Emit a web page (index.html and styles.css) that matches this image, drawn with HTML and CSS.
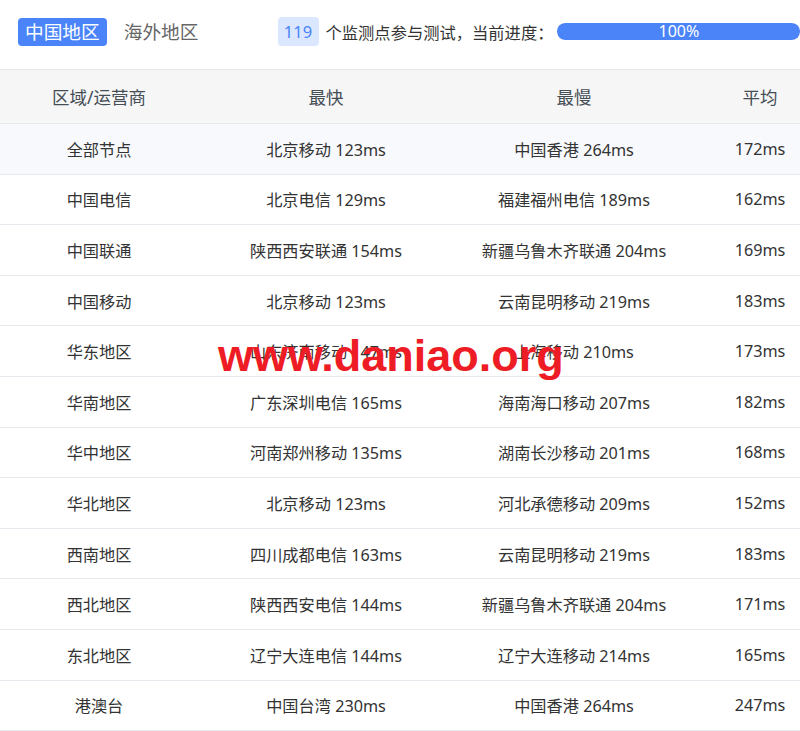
FILE: index.html
```html
<!DOCTYPE html>
<html lang="zh-CN">
<head>
<meta charset="utf-8">
<link rel="stylesheet" href="styles.css">
</head>
<body>
<div class="page">
  <div class="topbar">
    <div class="tabs">
      <span class="tab active">中国地区</span>
      <span class="tab">海外地区</span>
    </div>
    <div class="status">
      <span class="badge">119</span>
      <span class="status-text">个监测点参与测试，当前进度：</span>
      <div class="progress"><div class="progress-fill" style="width:100%">100%</div></div>
    </div>
  </div>
  <div class="table">
    <div class="row head">
      <div>区域/运营商</div><div>最快</div><div>最慢</div><div>平均</div>
    </div>
    <div class="row first"><div>全部节点</div><div>北京移动 123ms</div><div>中国香港 264ms</div><div>172ms</div></div>
    <div class="row"><div>中国电信</div><div>北京电信 129ms</div><div>福建福州电信 189ms</div><div>162ms</div></div>
    <div class="row"><div>中国联通</div><div>陕西西安联通 154ms</div><div>新疆乌鲁木齐联通 204ms</div><div>169ms</div></div>
    <div class="row"><div>中国移动</div><div>北京移动 123ms</div><div>云南昆明移动 219ms</div><div>183ms</div></div>
    <div class="row"><div>华东地区</div><div>山东济南移动 147ms</div><div>上海移动 210ms</div><div>173ms</div></div>
    <div class="row"><div>华南地区</div><div>广东深圳电信 165ms</div><div>海南海口移动 207ms</div><div>182ms</div></div>
    <div class="row"><div>华中地区</div><div>河南郑州移动 135ms</div><div>湖南长沙移动 201ms</div><div>168ms</div></div>
    <div class="row"><div>华北地区</div><div>北京移动 123ms</div><div>河北承德移动 209ms</div><div>152ms</div></div>
    <div class="row"><div>西南地区</div><div>四川成都电信 163ms</div><div>云南昆明移动 219ms</div><div>183ms</div></div>
    <div class="row"><div>西北地区</div><div>陕西西安电信 144ms</div><div>新疆乌鲁木齐联通 204ms</div><div>171ms</div></div>
    <div class="row"><div>东北地区</div><div>辽宁大连电信 144ms</div><div>辽宁大连移动 214ms</div><div>165ms</div></div>
    <div class="row"><div>港澳台</div><div>中国台湾 230ms</div><div>中国香港 264ms</div><div>247ms</div></div>
  </div>
  <div class="watermark">www.daniao.org</div>
</div>
</body>
</html>
```

FILE: styles.css
```css
html, body {
  margin: 0;
  padding: 0;
  background: #fff;
}
body {
  font-family: "Noto Sans", "Noto Sans CJK SC", sans-serif;
  color: #333;
  overflow: hidden;
}
.page {
  position: relative;
  width: 800px;
  height: 731px;
  overflow: hidden;
}
.topbar {
  display: flex;
  align-items: center;
  height: 69px;
  padding-left: 18px;
  box-sizing: border-box;
  padding-bottom: 6px;
  white-space: nowrap;
}
.tabs {
  display: flex;
  align-items: center;
  gap: 17px;
  flex-shrink: 0;
}
.tab {
  font-size: 18.7px;
  line-height: 28px;
  height: 28px;
  color: #666;
  flex-shrink: 0;
}
.tab.active {
  background: #4a84f8;
  color: #fff;
  border-radius: 4px;
  padding: 0 7px;
}
.status {
  display: flex;
  align-items: center;
  margin-left: 79px;
  flex-shrink: 0;
}
.badge {
  background: #dbe7ff;
  color: #4a84f8;
  font-size: 16.5px;
  line-height: 29px;
  height: 29px;
  width: 41px;
  text-align: center;
  border-radius: 4px;
  flex-shrink: 0;
}
.status-text {
  font-size: 16.3px;
  margin-left: 7px;
  color: #333;
  flex-shrink: 0;
}
.progress {
  margin-left: 4px;
  width: 243px;
  height: 17px;
  background: #e5ebf5;
  border-radius: 8px;
  overflow: hidden;
  flex-shrink: 0;
}
.progress-fill {
  height: 17px;
  background: #4a84f8;
  border-radius: 8px;
  color: #fff;
  font-size: 16px;
  line-height: 17px;
  text-align: center;
}
.table {
  width: 826px;
  border-top: 1px solid #e6e9ee;
}
.row {
  display: grid;
  grid-template-columns: 198px 256px 240px 132px;
  height: 50.6px;
  box-sizing: border-box;
  border-bottom: 1px solid #e6e9ee;
  align-items: center;
  font-size: 16.2px;
  color: #333;
}
.row > div {
  text-align: center;
  white-space: nowrap;
}
.row.head {
  height: 54px;
  background: #f6f6f7;
  color: #454d55;
  font-size: 17.5px;
}
.row.first {
  background: #f8f9fd;
}
.watermark {
  position: absolute;
  left: 218px;
  top: 330px;
  font-family: "Liberation Sans", Arial, sans-serif;
  font-weight: bold;
  font-size: 45px;
  line-height: 52px;
  color: #ee1c25;
}
```
